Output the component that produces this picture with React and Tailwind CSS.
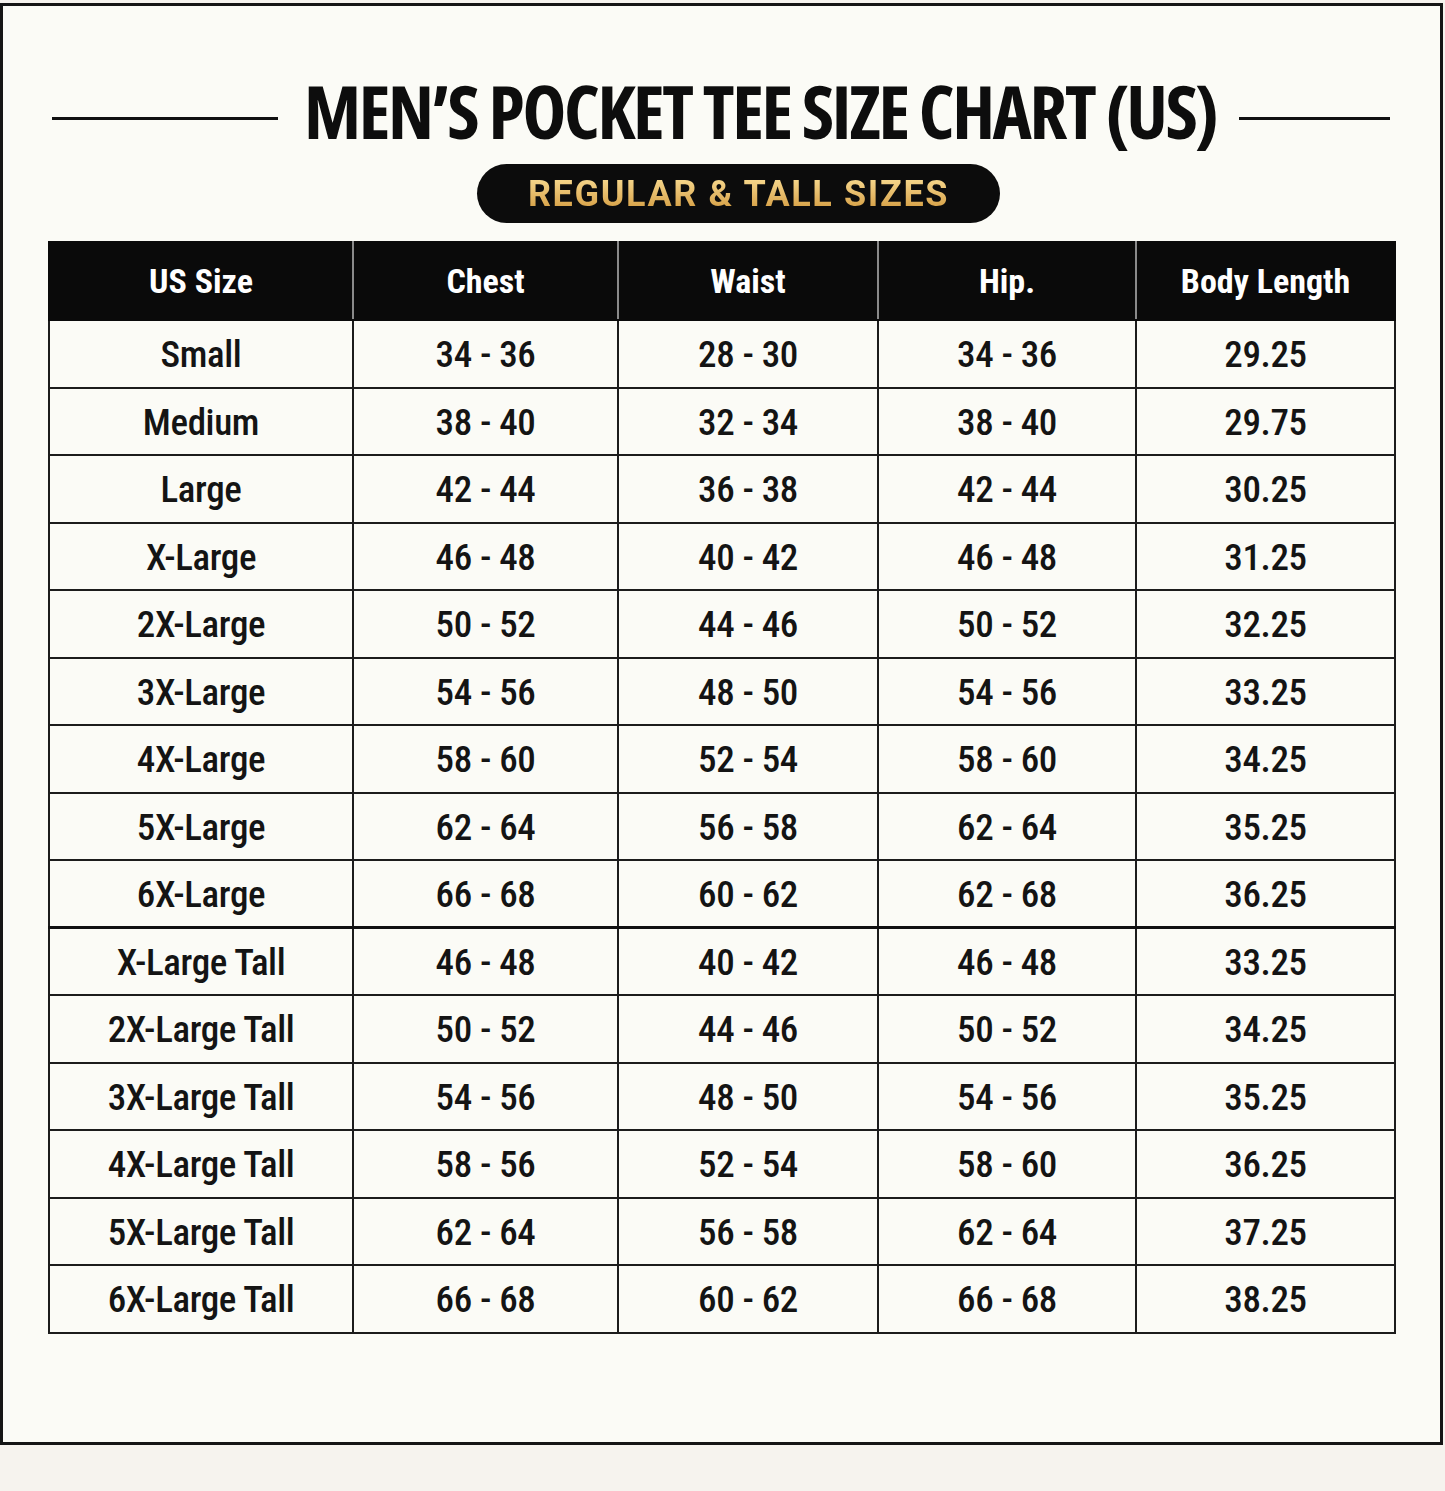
import React from 'react';

const rows = [
  ['Small', '34 - 36', '28 - 30', '34 - 36', '29.25'],
  ['Medium', '38 - 40', '32 - 34', '38 - 40', '29.75'],
  ['Large', '42 - 44', '36 - 38', '42 - 44', '30.25'],
  ['X-Large', '46 - 48', '40 - 42', '46 - 48', '31.25'],
  ['2X-Large', '50 - 52', '44 - 46', '50 - 52', '32.25'],
  ['3X-Large', '54 - 56', '48 - 50', '54 - 56', '33.25'],
  ['4X-Large', '58 - 60', '52 - 54', '58 - 60', '34.25'],
  ['5X-Large', '62 - 64', '56 - 58', '62 - 64', '35.25'],
  ['6X-Large', '66 - 68', '60 - 62', '62 - 68', '36.25'],
  ['X-Large Tall', '46 - 48', '40 - 42', '46 - 48', '33.25'],
  ['2X-Large Tall', '50 - 52', '44 - 46', '50 - 52', '34.25'],
  ['3X-Large Tall', '54 - 56', '48 - 50', '54 - 56', '35.25'],
  ['4X-Large Tall', '58 - 56', '52 - 54', '58 - 60', '36.25'],
  ['5X-Large Tall', '62 - 64', '56 - 58', '62 - 64', '37.25'],
  ['6X-Large Tall', '66 - 68', '60 - 62', '66 - 68', '38.25'],
];

const headers = ['US Size', 'Chest', 'Waist', 'Hip.', 'Body Length'];
const colWidths = ['w-[304px]', 'w-[265px]', 'w-[260px]', 'w-[258px]', 'w-[259px]'];

function App() {
  return (
    <div className="min-h-screen bg-[#f6f3ee] pt-[3px] font-['Roboto',sans-serif] text-[#141414]">
      {/* frame */}
      <div className="w-[1443px] h-[1442px] border-[3px] border-[#151515] bg-[#fbfbf6] flex flex-col">
        {/* title row */}
        <div className="flex items-center mt-[68px] pl-[49px] pr-[50px]">
          <div className="w-[226px] h-[3px] bg-[#111] mt-[14px]"></div>
          <h1 className="ml-[26px] mr-[23px] font-['Open_Sans',sans-serif] font-stretch-condensed text-[74px] leading-none font-bold tracking-[-0.031em] whitespace-nowrap text-[#0d0d0d]">
            MEN’S POCKET TEE SIZE CHART (US)
          </h1>
          <div className="flex-1 h-[3px] bg-[#111] mt-[14px]"></div>
        </div>

        {/* badge */}
        <div className="ml-[474px] mt-[16px] w-[523px] h-[59px] rounded-full bg-[#0c0c0c] flex items-center justify-center">
          <span className="text-[36px] leading-none font-bold tracking-[0.045em] bg-gradient-to-b from-[#f9dc92] to-[#d29a3c] bg-clip-text text-transparent">
            REGULAR &amp; TALL SIZES
          </span>
        </div>

        {/* table */}
        <table className="ml-[45px] mt-[18px] border-collapse table-fixed w-[1346px]">
          <thead>
            <tr className="h-[78px] bg-[#0a0a0a]">
              {headers.map((h, i) => (
                <th
                  key={h}
                  className={`${colWidths[i]} text-white text-[34px] font-bold font-stretch-semi-condensed text-center border-x-2 border-x-[#8a8a8a] first:border-l-[#0a0a0a] last:border-r-[#0a0a0a] border-y-2 border-y-[#0a0a0a]`}
                >
                  {h}
                </th>
              ))}
            </tr>
          </thead>
          <tbody>
            {rows.map((r, ri) => (
              <tr key={r[0]} className={ri === 9 ? 'h-[67.5px] border-t-[3px] border-[#111]' : 'h-[67.5px]'}>
                {r.map((c, ci) => (
                  <td
                    key={ci}
                    className="border-2 border-[#1c1c1c] text-center text-[37px] font-medium font-stretch-condensed tracking-[-0.01em] leading-none pt-[2px]"
                  >
                    {c}
                  </td>
                ))}
              </tr>
            ))}
          </tbody>
        </table>
      </div>
    </div>
  );
}

export default App;
